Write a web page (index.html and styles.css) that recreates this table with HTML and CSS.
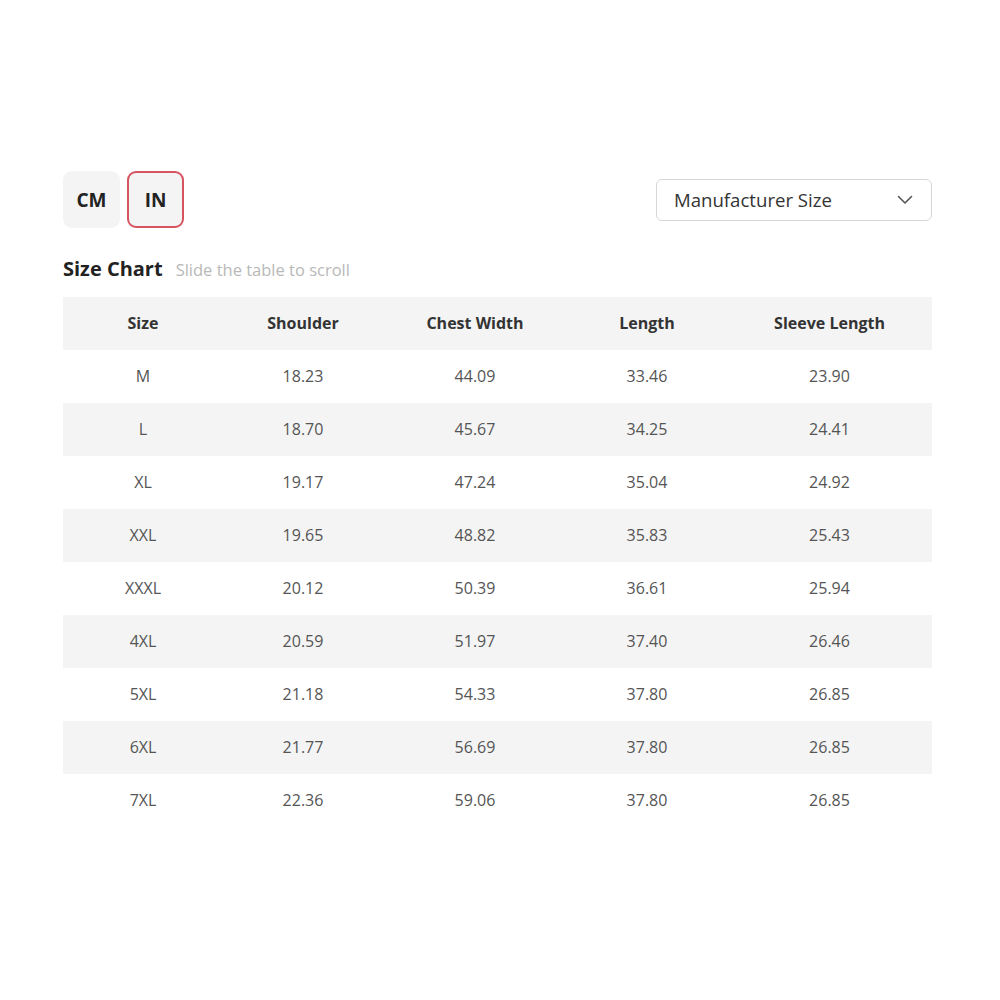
FILE: index.html
```html
<!DOCTYPE html>
<html>
<head>
<meta charset="utf-8">
<link rel="stylesheet" href="styles.css">
</head>
<body>
<div class="page">
  <div class="toolbar">
    <div class="units">
      <div class="unit">CM</div>
      <div class="unit active">IN</div>
    </div>
    <div class="select">
      <span>Manufacturer Size</span>
      <svg class="chev" width="16" height="10" viewBox="0 0 16 10"><path d="M1.5 1.5 L8 8 L14.5 1.5" fill="none" stroke="#555" stroke-width="1.6" stroke-linecap="round" stroke-linejoin="round"/></svg>
    </div>
  </div>
  <div class="title">
    <h2>Size Chart</h2>
    <span class="hint">Slide the table to scroll</span>
  </div>
  <table class="chart">
    <colgroup>
      <col class="c1"><col class="c2"><col class="c3"><col class="c4"><col class="c5">
    </colgroup>
    <thead>
      <tr><th>Size</th><th>Shoulder</th><th>Chest Width</th><th>Length</th><th>Sleeve Length</th></tr>
    </thead>
    <tbody>
      <tr><td>M</td><td>18.23</td><td>44.09</td><td>33.46</td><td>23.90</td></tr>
      <tr><td>L</td><td>18.70</td><td>45.67</td><td>34.25</td><td>24.41</td></tr>
      <tr><td>XL</td><td>19.17</td><td>47.24</td><td>35.04</td><td>24.92</td></tr>
      <tr><td>XXL</td><td>19.65</td><td>48.82</td><td>35.83</td><td>25.43</td></tr>
      <tr><td>XXXL</td><td>20.12</td><td>50.39</td><td>36.61</td><td>25.94</td></tr>
      <tr><td>4XL</td><td>20.59</td><td>51.97</td><td>37.40</td><td>26.46</td></tr>
      <tr><td>5XL</td><td>21.18</td><td>54.33</td><td>37.80</td><td>26.85</td></tr>
      <tr><td>6XL</td><td>21.77</td><td>56.69</td><td>37.80</td><td>26.85</td></tr>
      <tr><td>7XL</td><td>22.36</td><td>59.06</td><td>37.80</td><td>26.85</td></tr>
    </tbody>
  </table>
</div>
</body>
</html>
```
FILE: styles.css
```css
html, body {
  margin: 0;
  padding: 0;
  background: #fff;
}
body {
  font-family: "Open Sans", "Noto Sans", sans-serif;
  color: #333;
}
.page {
  width: 869px;
  margin-left: 63px;
  padding-top: 171px;
}
.toolbar {
  display: flex;
  justify-content: space-between;
  align-items: center;
}
.units {
  display: flex;
  gap: 7px;
}
.unit {
  width: 57px;
  height: 57px;
  box-sizing: border-box;
  display: flex;
  align-items: center;
  justify-content: center;
  background: #f4f4f4;
  border-radius: 9px;
  font-size: 19px;
  font-weight: 700;
  color: #222;
  border: 2px solid transparent;
}
.unit.active {
  border-color: #d65460;
}
.select {
  width: 276px;
  height: 42px;
  box-sizing: border-box;
  border: 1px solid #d6d6d6;
  border-radius: 6px;
  display: flex;
  align-items: center;
  justify-content: space-between;
  padding: 0 18px 0 17px;
  font-size: 18.6px;
  color: #333;
}
.chev {
  display: block;
}
.title {
  display: flex;
  align-items: baseline;
  gap: 13px;
  margin-top: 27px;
  height: 42px;
}
.title h2 {
  margin: 0;
  font-size: 20px;
  font-weight: 700;
  color: #222;
}
.hint {
  font-size: 16.5px;
  color: #b8b8b8;
}
.chart {
  width: 869px;
  border-collapse: collapse;
  table-layout: fixed;
  margin-top: 0;
}
.c1 { width: 160px; }
.c2 { width: 160px; }
.c3 { width: 184px; }
.c4 { width: 160px; }
.c5 { width: 205px; }
.chart th, .chart td {
  height: 51px;
  padding: 0 0 2px;
  text-align: center;
  vertical-align: middle;
}
.chart th {
  font-size: 16px;
  font-weight: 700;
  color: #333;
  background: #f4f4f4;
}
.chart td {
  font-size: 16px;
  color: #555;
}
.chart tbody tr:nth-child(even) td {
  background: #f4f4f4;
}
```
